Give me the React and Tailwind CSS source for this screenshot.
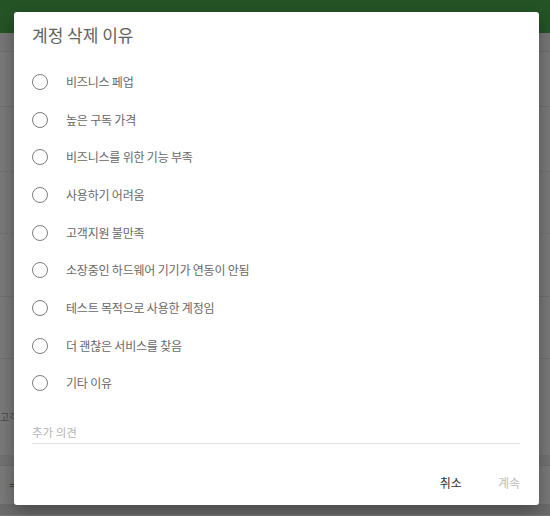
import React, { useState } from 'react'

const reasons = [
  '비즈니스 페업',
  '높은 구독 가격',
  '비즈니스를 위한 기능 부족',
  '사용하기 어려움',
  '고객지원 불만족',
  '소장중인 하드웨어 기기가 연동이 안됨',
  '테스트 목적으로 사용한 계정임',
  '더 괜찮은 서비스를 찾음',
  '기타 이유',
]

const font = { fontFamily: '"Noto Sans CJK KR", "Noto Sans", sans-serif' }

function Radio({ label, checked, onChange }) {
  return (
    <label className="h-[37.7px] flex items-center cursor-pointer">
      <span className="w-4 h-4 rounded-full border-[1.5px] border-[#7d7d7d] flex items-center justify-center shrink-0">
        {checked && <span className="w-2 h-2 rounded-full bg-[#2e7d32]" />}
      </span>
      <input type="radio" className="hidden" checked={checked} onChange={onChange} />
      <span className="ml-[18px] text-[12px] text-[#686868] tracking-[-0.2px]">{label}</span>
    </label>
  )
}

export default function App() {
  const [picked, setPicked] = useState(null)
  const [note, setNote] = useState('')

  return (
    <div className="relative w-[550px] h-[516px] overflow-hidden bg-[#7a7a7a]" style={font}>
      {/* page behind the overlay, dimmed */}
      <div className="h-[33px] bg-[#255426]" />
      <div className="h-[19px] bg-[#777777] border-b border-[#6f6f6f]" />
      <div className="h-[55px] border-b border-[#707070]" />
      <div className="h-[65px] border-b border-dashed border-[#6f6f6f]" />
      <div className="h-[62px] border-b border-dashed border-[#6f6f6f]" />
      <div className="h-[63px] border-b border-[#707070]" />
      <div className="h-[62px] border-b border-[#707070]" />
      <div className="h-[97px] border-b border-[#727272] pt-[50px] text-[10px] text-[#4a4a4a]">고객</div>
      <div className="h-[10px] bg-[#737373] border-b border-[#6e6e6e]" />
      <div className="h-[38px] pt-[14px] pl-[8px] text-[9px] text-[#333]">ㅋ</div>
      <div className="h-[11px] bg-[#6c6c6c]" />

      {/* dialog */}
      <div className="absolute left-[14px] top-[12px] w-[525px] h-[493px] bg-white rounded-[3px] shadow-[0_6px_18px_rgba(0,0,0,0.35)] flex flex-col px-[18px] pt-[11px]">
        <h2 className="text-[17px] leading-6 text-[#616161] font-normal">계정 삭제 이유</h2>
        <div className="mt-4 flex flex-col">
          {reasons.map((r, i) => (
            <Radio key={r} label={r} checked={picked === i} onChange={() => setPicked(i)} />
          ))}
        </div>
        <div className="mt-[16px] border-b border-[#e3e3e3] mr-[1px]">
          <input
            value={note}
            onChange={e => setNote(e.target.value)}
            placeholder="추가 의견"
            className="w-full h-[22px] text-[11.5px] text-[#555] placeholder-[#b5b5b5] outline-none bg-transparent"
          />
        </div>
        <div className="mt-auto mb-[10px] flex justify-end items-center gap-[36px] pr-[1px]">
          <button className="text-[12px] text-[#333] h-6">취소</button>
          <button className="text-[12px] text-[#bdbdbd] h-6" disabled={picked === null}>계속</button>
        </div>
      </div>
    </div>
  )
}
